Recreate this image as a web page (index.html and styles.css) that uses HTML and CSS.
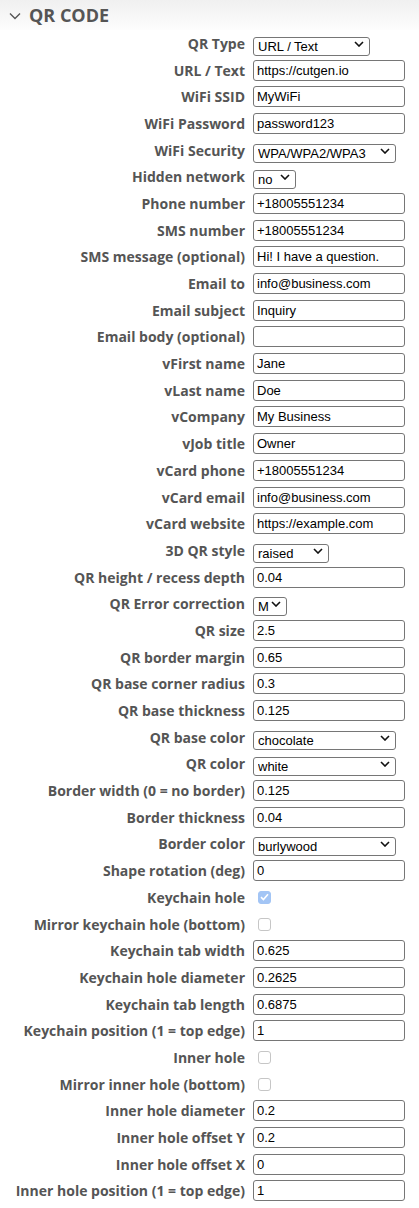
FILE: index.html
```html
<!DOCTYPE html>
<html>
<head>
<meta charset="utf-8">
<link rel="stylesheet" href="styles.css">
</head>
<body>
<div class="panel">
  <div class="panel-head">
    <svg class="chev" width="12" height="8" viewBox="0 0 12 8"><path d="M1 1.5 L6 6.5 L11 1.5" fill="none" stroke="#555" stroke-width="1.4"/></svg>
    <span class="panel-title">QR CODE</span>
  </div>
  <div class="form">
    <label class="lbl">QR Type</label><div class="cell"><span class="sel w117"><select><option>URL / Text</option></select><svg class="arr" width="10" height="6" viewBox="0 0 10 6"><path d="M1 1 L5 5 L9 1" fill="none" stroke="#111" stroke-width="1.6"/></svg></span></div>
    <label class="lbl">URL / Text</label><div class="cell"><input class="txt" value="https://cutgen.io"></div>
    <label class="lbl">WiFi SSID</label><div class="cell"><input class="txt" value="MyWiFi"></div>
    <label class="lbl">WiFi Password</label><div class="cell"><input class="txt" value="password123"></div>
    <label class="lbl">WiFi Security</label><div class="cell"><span class="sel w143"><select><option>WPA/WPA2/WPA3</option></select><svg class="arr" width="10" height="6" viewBox="0 0 10 6"><path d="M1 1 L5 5 L9 1" fill="none" stroke="#111" stroke-width="1.6"/></svg></span></div>
    <label class="lbl">Hidden network</label><div class="cell"><span class="sel w43"><select><option>no</option></select><svg class="arr" width="10" height="6" viewBox="0 0 10 6"><path d="M1 1 L5 5 L9 1" fill="none" stroke="#111" stroke-width="1.6"/></svg></span></div>
    <label class="lbl">Phone number</label><div class="cell"><input class="txt" value="+18005551234"></div>
    <label class="lbl">SMS number</label><div class="cell"><input class="txt" value="+18005551234"></div>
    <label class="lbl">SMS message (optional)</label><div class="cell"><input class="txt" value="Hi! I have a question."></div>
    <label class="lbl">Email to</label><div class="cell"><input class="txt" value="info@business.com"></div>
    <label class="lbl">Email subject</label><div class="cell"><input class="txt" value="Inquiry"></div>
    <label class="lbl">Email body (optional)</label><div class="cell"><input class="txt" value=""></div>
    <label class="lbl">vFirst name</label><div class="cell"><input class="txt" value="Jane"></div>
    <label class="lbl">vLast name</label><div class="cell"><input class="txt" value="Doe"></div>
    <label class="lbl">vCompany</label><div class="cell"><input class="txt" value="My Business"></div>
    <label class="lbl">vJob title</label><div class="cell"><input class="txt" value="Owner"></div>
    <label class="lbl">vCard phone</label><div class="cell"><input class="txt" value="+18005551234"></div>
    <label class="lbl">vCard email</label><div class="cell"><input class="txt" value="info@business.com"></div>
    <label class="lbl">vCard website</label><div class="cell"><input class="txt" value="https://example.com"></div>
    <label class="lbl">3D QR style</label><div class="cell"><span class="sel w76"><select><option>raised</option></select><svg class="arr" width="10" height="6" viewBox="0 0 10 6"><path d="M1 1 L5 5 L9 1" fill="none" stroke="#111" stroke-width="1.6"/></svg></span></div>
    <label class="lbl">QR height / recess depth</label><div class="cell"><input class="txt" value="0.04"></div>
    <label class="lbl">QR Error correction</label><div class="cell"><span class="sel w34"><select><option>M</option></select><svg class="arr" width="10" height="6" viewBox="0 0 10 6"><path d="M1 1 L5 5 L9 1" fill="none" stroke="#111" stroke-width="1.6"/></svg></span></div>
    <label class="lbl">QR size</label><div class="cell"><input class="txt" value="2.5"></div>
    <label class="lbl">QR border margin</label><div class="cell"><input class="txt" value="0.65"></div>
    <label class="lbl">QR base corner radius</label><div class="cell"><input class="txt" value="0.3"></div>
    <label class="lbl">QR base thickness</label><div class="cell"><input class="txt" value="0.125"></div>
    <label class="lbl">QR base color</label><div class="cell"><span class="sel w143"><select><option>chocolate</option></select><svg class="arr" width="10" height="6" viewBox="0 0 10 6"><path d="M1 1 L5 5 L9 1" fill="none" stroke="#111" stroke-width="1.6"/></svg></span></div>
    <label class="lbl">QR color</label><div class="cell"><span class="sel w143"><select><option>white</option></select><svg class="arr" width="10" height="6" viewBox="0 0 10 6"><path d="M1 1 L5 5 L9 1" fill="none" stroke="#111" stroke-width="1.6"/></svg></span></div>
    <label class="lbl">Border width (0 = no border)</label><div class="cell"><input class="txt" value="0.125"></div>
    <label class="lbl">Border thickness</label><div class="cell"><input class="txt" value="0.04"></div>
    <label class="lbl">Border color</label><div class="cell"><span class="sel w143"><select><option>burlywood</option></select><svg class="arr" width="10" height="6" viewBox="0 0 10 6"><path d="M1 1 L5 5 L9 1" fill="none" stroke="#111" stroke-width="1.6"/></svg></span></div>
    <label class="lbl">Shape rotation (deg)</label><div class="cell"><input class="txt" value="0"></div>
    <label class="lbl">Keychain hole</label><div class="cell"><span class="chk on"><svg width="9" height="8" viewBox="0 0 9 8"><path d="M1 4.2 L3.4 6.5 L8 1.2" fill="none" stroke="#fff" stroke-width="1.6"/></svg></span></div>
    <label class="lbl">Mirror keychain hole (bottom)</label><div class="cell"><span class="chk"></span></div>
    <label class="lbl">Keychain tab width</label><div class="cell"><input class="txt" value="0.625"></div>
    <label class="lbl">Keychain hole diameter</label><div class="cell"><input class="txt" value="0.2625"></div>
    <label class="lbl">Keychain tab length</label><div class="cell"><input class="txt" value="0.6875"></div>
    <label class="lbl">Keychain position (1 = top edge)</label><div class="cell"><input class="txt" value="1"></div>
    <label class="lbl">Inner hole</label><div class="cell"><span class="chk"></span></div>
    <label class="lbl">Mirror inner hole (bottom)</label><div class="cell"><span class="chk"></span></div>
    <label class="lbl">Inner hole diameter</label><div class="cell"><input class="txt" value="0.2"></div>
    <label class="lbl">Inner hole offset Y</label><div class="cell"><input class="txt" value="0.2"></div>
    <label class="lbl">Inner hole offset X</label><div class="cell"><input class="txt" value="0"></div>
    <label class="lbl">Inner hole position (1 = top edge)</label><div class="cell"><input class="txt" value="1"></div>
  </div>
</div>
</body>
</html>
```
FILE: styles.css
```css
html, body {
  margin: 0;
  padding: 0;
  background: #fff;
}
.panel {
  width: 419px;
  font-family: "Open Sans", "Noto Sans", sans-serif;
  color: #555;
}
.panel-head {
  height: 30px;
  display: flex;
  align-items: center;
  gap: 8px;
  padding-left: 9px;
  background: linear-gradient(#f0f0f0, #fdfdfd);
  box-sizing: border-box;
}
.chev {
  display: block;
  margin-top: 2px;
}
.panel-title {
  font-weight: 700;
  font-size: 18px;
  color: #555;
}
.form {
  display: grid;
  grid-template-columns: 1fr 158px;
  grid-auto-rows: 26.7px;
  column-gap: 8px;
  padding-right: 8px;
}
.lbl {
  font-weight: 700;
  font-size: 14px;
  text-align: right;
  align-self: center;
  white-space: nowrap;
  color: #555;
}
.cell {
  display: flex;
  align-items: center;
}
.txt {
  box-sizing: border-box;
  width: 152px;
  height: 21px;
  margin: 0;
  padding: 1px 3px;
  border: 1px solid #767676;
  border-radius: 3px;
  font-family: "Liberation Sans", Arial, sans-serif;
  font-size: 13px;
  color: #000;
  background: #fff;
  outline: none;
}
.sel {
  position: relative;
  display: inline-block;
  height: 19px;
}
.sel select {
  -webkit-appearance: none;
  appearance: none;
  box-sizing: border-box;
  width: 100%;
  height: 19px;
  margin: 0;
  padding: 0 0 0 4px;
  border: 1px solid #767676;
  border-radius: 3px;
  background: #fff;
  font-family: "Liberation Sans", Arial, sans-serif;
  font-size: 13px;
  color: #000;
  outline: none;
}
.sel .arr {
  position: absolute;
  right: 6px;
  top: 7px;
  pointer-events: none;
}
.w117 { width: 117px; }
.w143 { width: 143px; }
.w43 { width: 43px; }
.w76 { width: 76px; }
.w34 { width: 34px; }
.chk {
  box-sizing: border-box;
  width: 13px;
  height: 13px;
  margin-left: 5px;
  border: 1px solid #c6c6c6;
  border-radius: 3px;
  background: #fff;
  display: flex;
  align-items: center;
  justify-content: center;
}
.chk.on {
  border-color: #a3c5f5;
  background: #a3c5f5;
}
```
